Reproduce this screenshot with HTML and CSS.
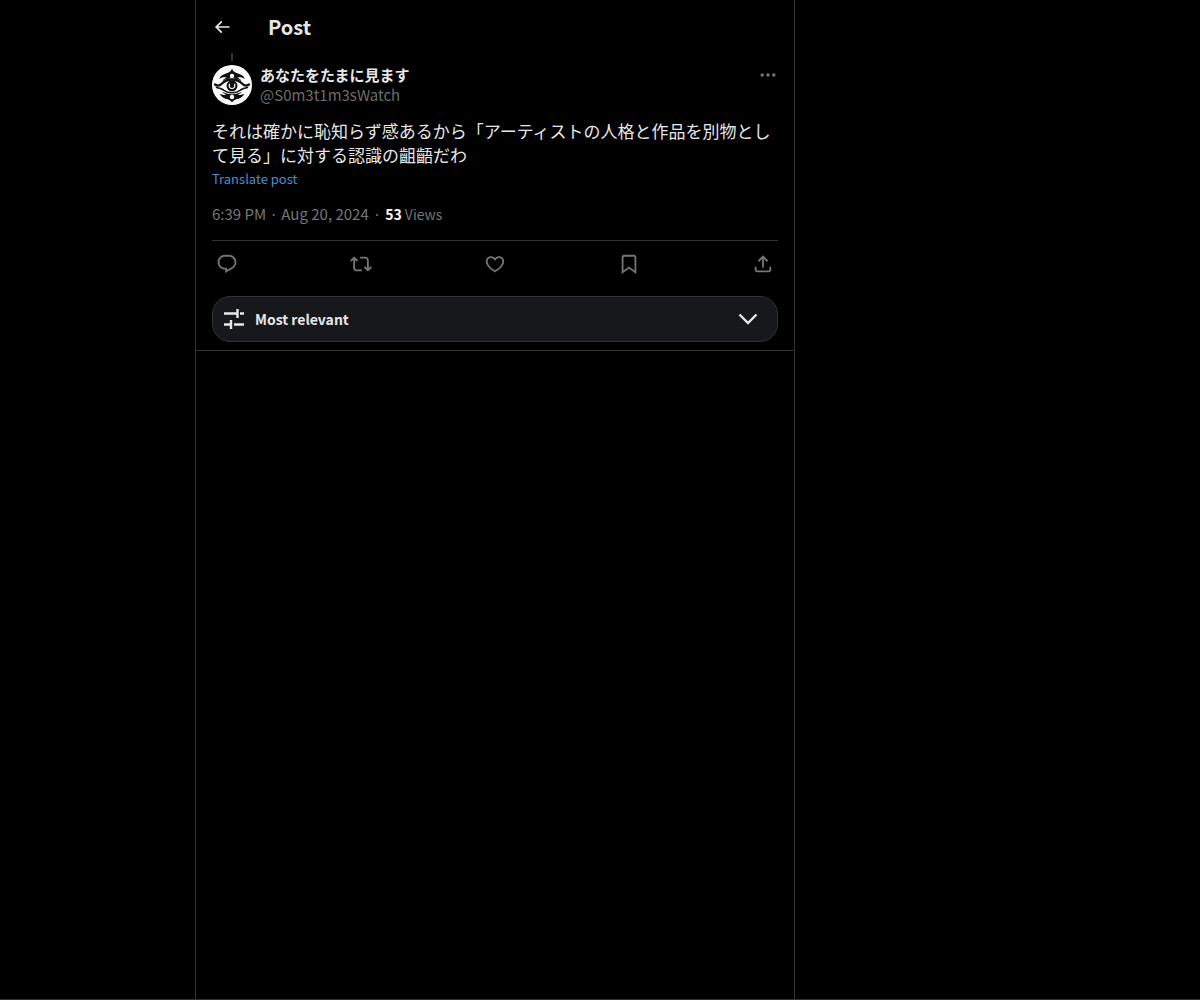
FILE: index.html
```html
<!DOCTYPE html>
<html lang="ja">
<head>
  <meta charset="UTF-8" />
  <meta name="viewport" content="width=device-width, initial-scale=1.0"/>
  <title>Post</title>
  <link rel="stylesheet" href="styles.css">
</head>
<body>
  <div class="layout">
    <main class="column">
      <header class="top-bar">
        <button class="icon-btn back-btn" aria-label="Back">
          <svg class="icon icon-small" viewBox="0 0 24 24"><path d="M7.414 13l5.043 5.04-1.414 1.42L3.586 12l7.457-7.46 1.414 1.42L7.414 11H21v2H7.414z"/></svg>
        </button>
        <h1>Post</h1>
      </header>

      <article class="post">
        <div class="thread-line"></div>
        <div class="author">
          <a href="#" class="avatar" aria-label="@S0m3t1m3sWatch">
            <svg viewBox="0 0 40 40">
              <circle cx="20" cy="20" r="20" fill="#fff"/>
              <g fill="#111">
                <path d="M20 3.500c.8 2.500 2.500 3.800 5.500 4.800 3.500 1.200 6 2.200 7.500 5.700-2.500-1.700-5-2-7.500-1.500 1.500.8 3 1.800 4 3.500-3-2-6-2.800-9.500-2.800s-6.500.8-9.500 2.800c1-1.700 2.500-2.700 4-3.500-2.500-.5-5-.2-7.500 1.500 1.500-3.500 4-4.500 7.500-5.700 3-1 4.700-2.300 5.500-4.800z"/>
                <path d="M20 37.500c-1-2-3-2.800-5.500-3.500-3.500-1-5.500-2.500-7-5.500 2.500 1.500 4.500 1.700 6.500 1.200-1.500-.7-3-1.700-4-3.200 3 1.800 6.500 2.800 10 2.800s7-1 10-2.800c-1 1.500-2.500 2.500-4 3.200 2 .5 4 .3 6.500-1.200-1.500 3-3.500 4.500-7 5.500-2.500.7-4.500 1.500-5.500 3.500z"/>
              </g>
              <g fill="none" stroke="#111" stroke-linecap="round">
                <path d="M3 19.500c2.500 2 5 1 7-1 3-3 6-4 10-4s7 1 10 4c2 2 4.500 3 7 1" stroke-width="2.400"/>
                <path d="M4.500 22.500c3.500.5 5 1 7 2.500 2.500 2 5 2.700 8.500 2.700s6-.7 8.500-2.700c2-1.500 3.500-2 7-2.500" stroke-width="1.600"/>
              </g>
              <circle cx="20" cy="20.800" r="5.500" fill="#111"/>
              <path d="M17.500 18.800c-1 3 .5 4.700 2.500 4.700s3.500-1.700 2.500-4.700" fill="none" stroke="#fff" stroke-width="1.200"/>
              <circle cx="20" cy="11" r="2.200" fill="#fff"/>
              <circle cx="20" cy="32" r="2.200" fill="#fff"/>
            </svg>
          </a>
          <div class="names">
            <a href="#" class="name">あなたをたまに見ます</a>
            <a href="#" class="handle">@S0m3t1m3sWatch</a>
          </div>
          <button class="icon-btn more-btn" aria-label="More">
            <svg class="icon icon-small" viewBox="0 0 24 24"><path d="M3 12c0-1.100.9-2 2-2s2 .9 2 2-.9 2-2 2-2-.9-2-2zm9 2c1.100 0 2-.9 2-2s-.9-2-2-2-2 .9-2 2 .9 2 2 2zm7 0c1.100 0 2-.9 2-2s-.9-2-2-2-2 .9-2 2 .9 2 2 2z"/></svg>
          </button>
        </div>

        <p class="post-text">それは確かに恥知らず感あるから「アーティストの人格と作品を別物として見る」に対する認識の齟齬だわ</p>
        <a href="#" class="translate">Translate post</a>

        <div class="meta">
          <a href="#"><time datetime="2024-08-20T18:39">6:39 PM · Aug 20, 2024</time></a>
          <span>·</span>
          <a href="#" class="views"><strong>53</strong> Views</a>
        </div>

        <div class="actions">
          <button class="icon-btn" aria-label="Reply">
            <svg class="icon" viewBox="0 0 24 24"><path d="M1.751 10c0-4.420 3.584-8 8.005-8h4.366c4.490 0 8.129 3.640 8.129 8.130 0 2.960-1.607 5.680-4.196 7.110l-8.054 4.460v-3.690h-.067c-4.490.1-8.183-3.510-8.183-8.010zm8.005-6c-3.317 0-6.005 2.690-6.005 6 0 3.370 2.770 6.080 6.138 6.010l.351-.01h1.761v2.300l5.087-2.810c1.951-1.080 3.163-3.130 3.163-5.360 0-3.390-2.744-6.130-6.129-6.130H9.756z"/></svg>
          </button>
          <button class="icon-btn" aria-label="Repost">
            <svg class="icon" viewBox="0 0 24 24"><path d="M4.500 3.880l4.432 4.140-1.364 1.460L5.500 7.550V16c0 1.100.896 2 2 2H13v2H7.500c-2.209 0-4-1.790-4-4V7.550L1.432 9.480.068 8.020 4.500 3.880zM16.500 6H11V4h5.500c2.209 0 4 1.790 4 4v8.450l2.068-1.930 1.364 1.460-4.432 4.140-4.432-4.140 1.364-1.460 2.068 1.930V8c0-1.100-.896-2-2-2z"/></svg>
          </button>
          <button class="icon-btn" aria-label="Like">
            <svg class="icon" viewBox="0 0 24 24"><path d="M16.697 5.500c-1.222-.06-2.679.51-3.890 2.160l-.805 1.090-.806-1.090C9.984 6.010 8.526 5.440 7.304 5.500c-1.243.07-2.349.78-2.910 1.910-.552 1.120-.633 2.780.479 4.820 1.074 1.970 3.257 4.270 7.129 6.610 3.870-2.340 6.052-4.640 7.126-6.610 1.111-2.040 1.030-3.700.477-4.820-.561-1.130-1.666-1.840-2.908-1.910zm4.187 7.690c-1.351 2.480-4.001 5.120-8.379 7.670l-.503.3-.504-.3c-4.379-2.550-7.029-5.190-8.382-7.670-1.360-2.500-1.410-4.860-.514-6.670.887-1.790 2.647-2.910 4.601-3.010 1.651-.09 3.368.56 4.798 2.010 1.429-1.450 3.146-2.100 4.796-2.010 1.954.1 3.714 1.220 4.601 3.010.896 1.810.846 4.170-.514 6.670z"/></svg>
          </button>
          <button class="icon-btn" aria-label="Bookmark">
            <svg class="icon" viewBox="0 0 24 24"><path d="M4 4.500C4 3.120 5.119 2 6.500 2h11C18.881 2 20 3.120 20 4.500v18.440l-8-5.710-8 5.710V4.500zM6.500 4c-.276 0-.5.22-.5.5v14.560l6-4.290 6 4.290V4.500c0-.28-.224-.5-.5-.5h-11z"/></svg>
          </button>
          <button class="icon-btn" aria-label="Share">
            <svg class="icon" viewBox="0 0 24 24"><path d="M12 2.590l5.700 5.700-1.410 1.420L13 6.410V16h-2V6.410l-3.300 3.300-1.410-1.420L12 2.590zM21 15l-.02 3.510c0 1.380-1.120 2.490-2.500 2.490H5.500C4.110 21 3 19.880 3 18.500V15h2v3.500c0 .28.22.5.5.5h12.980c.28 0 .5-.22.5-.5L19 15h2z"/></svg>
          </button>
        </div>

        <div class="sort">
          <label for="sort" aria-label="Sort replies">
            <svg class="sort-icon" viewBox="0 0 22 22"><path d="M1 5.500h13.500M17 5.500h4M14.500 1v9M1 16.500h7M11 16.500h10M8 12v9"/></svg>
          </label>
          <select id="sort">
            <option>Most relevant</option>
            <option>Most recent</option>
            <option>Most liked</option>
          </select>
          <svg class="chevron" viewBox="0 0 20 12"><path d="M1.500 1.500L10 10l8.500-8.500"/></svg>
        </div>
      </article>
    </main>
  </div>
</body>
</html>
```
FILE: styles.css
```css
* {
  box-sizing: border-box;
  margin: 0;
  padding: 0;
}

body {
  background-color: #000;
  color: #e7e7e7;
  font-family: 'Noto Sans CJK JP', sans-serif;
  font-size: 15px;
  line-height: 20px;
}

a {
  color: inherit;
  text-decoration: none;
}

a:hover {
  text-decoration: underline;
}

.layout {
  display: grid;
  grid-template-columns: 195px minmax(0, 600px) 1fr;
  min-height: 100vh;
  border-bottom: 1px solid #333;
}

.column {
  grid-column: 2;
  border-left: 1px solid #333;
  border-right: 1px solid #333;
}

.top-bar {
  display: flex;
  align-items: center;
  gap: 30px;
  height: 53px;
  padding: 0 16px;
}

.top-bar h1 {
  font-size: 20px;
  line-height: 24px;
}

.icon-btn {
  display: flex;
  align-items: center;
  justify-content: center;
  width: 30px;
  height: 30px;
  background: none;
  border: none;
  color: #757575;
  cursor: pointer;
}

.icon {
  width: 22px;
  height: 22px;
  fill: currentColor;
}

.icon-small {
  width: 20px;
  height: 20px;
}

.back-btn {
  justify-content: flex-start;
  width: 26px;
  color: #e7e7e7;
}

.post {
  padding: 0 16px 8px;
  border-bottom: 1px solid #333;
}

.thread-line {
  width: 2px;
  height: 8px;
  margin: 0 19px 4px;
  background-color: #333;
}

.author {
  display: flex;
  align-items: flex-start;
  gap: 8px;
}

.avatar,
.avatar svg {
  display: block;
  width: 40px;
  height: 40px;
}

.names {
  display: flex;
  flex-direction: column;
  flex-grow: 1;
}

.name {
  font-weight: bold;
}

.handle {
  color: #6c6c6c;
}

.more-btn {
  justify-content: flex-end;
  height: 20px;
}

.post-text {
  margin-top: 14px;
  font-size: 17px;
  line-height: 24px;
}

.translate {
  display: block;
  color: #4a8fd0;
  font-size: 13px;
  line-height: 24px;
}

.meta {
  display: flex;
  gap: 4px;
  padding: 13px 0 16px;
  border-bottom: 1px solid #333;
  color: #757575;
}

.views {
  font-size: 14px;
}

.meta strong {
  color: #fff;
}

.actions {
  display: flex;
  justify-content: space-between;
  padding: 8px 0 17px;
}

.sort {
  display: flex;
  align-items: center;
  position: relative;
  height: 46px;
  background-color: #16181c;
  border: 1px solid #333;
  border-radius: 18px;
}

.sort label {
  display: flex;
  padding: 0 10px;
}

.sort select {
  flex-grow: 1;
  height: 44px;
  background: none;
  border: none;
  appearance: none;
  color: #e7e7e7;
  font-family: inherit;
  font-size: 14px;
  font-weight: bold;
  cursor: pointer;
}

.sort option {
  background-color: #16181c;
}

.sort-icon,
.chevron {
  fill: none;
  stroke: #e7e7e7;
  stroke-width: 2.4;
}

.sort-icon {
  width: 22px;
  height: 22px;
}

.chevron {
  position: absolute;
  right: 19px;
  width: 20px;
  height: 12px;
  pointer-events: none;
}
```
